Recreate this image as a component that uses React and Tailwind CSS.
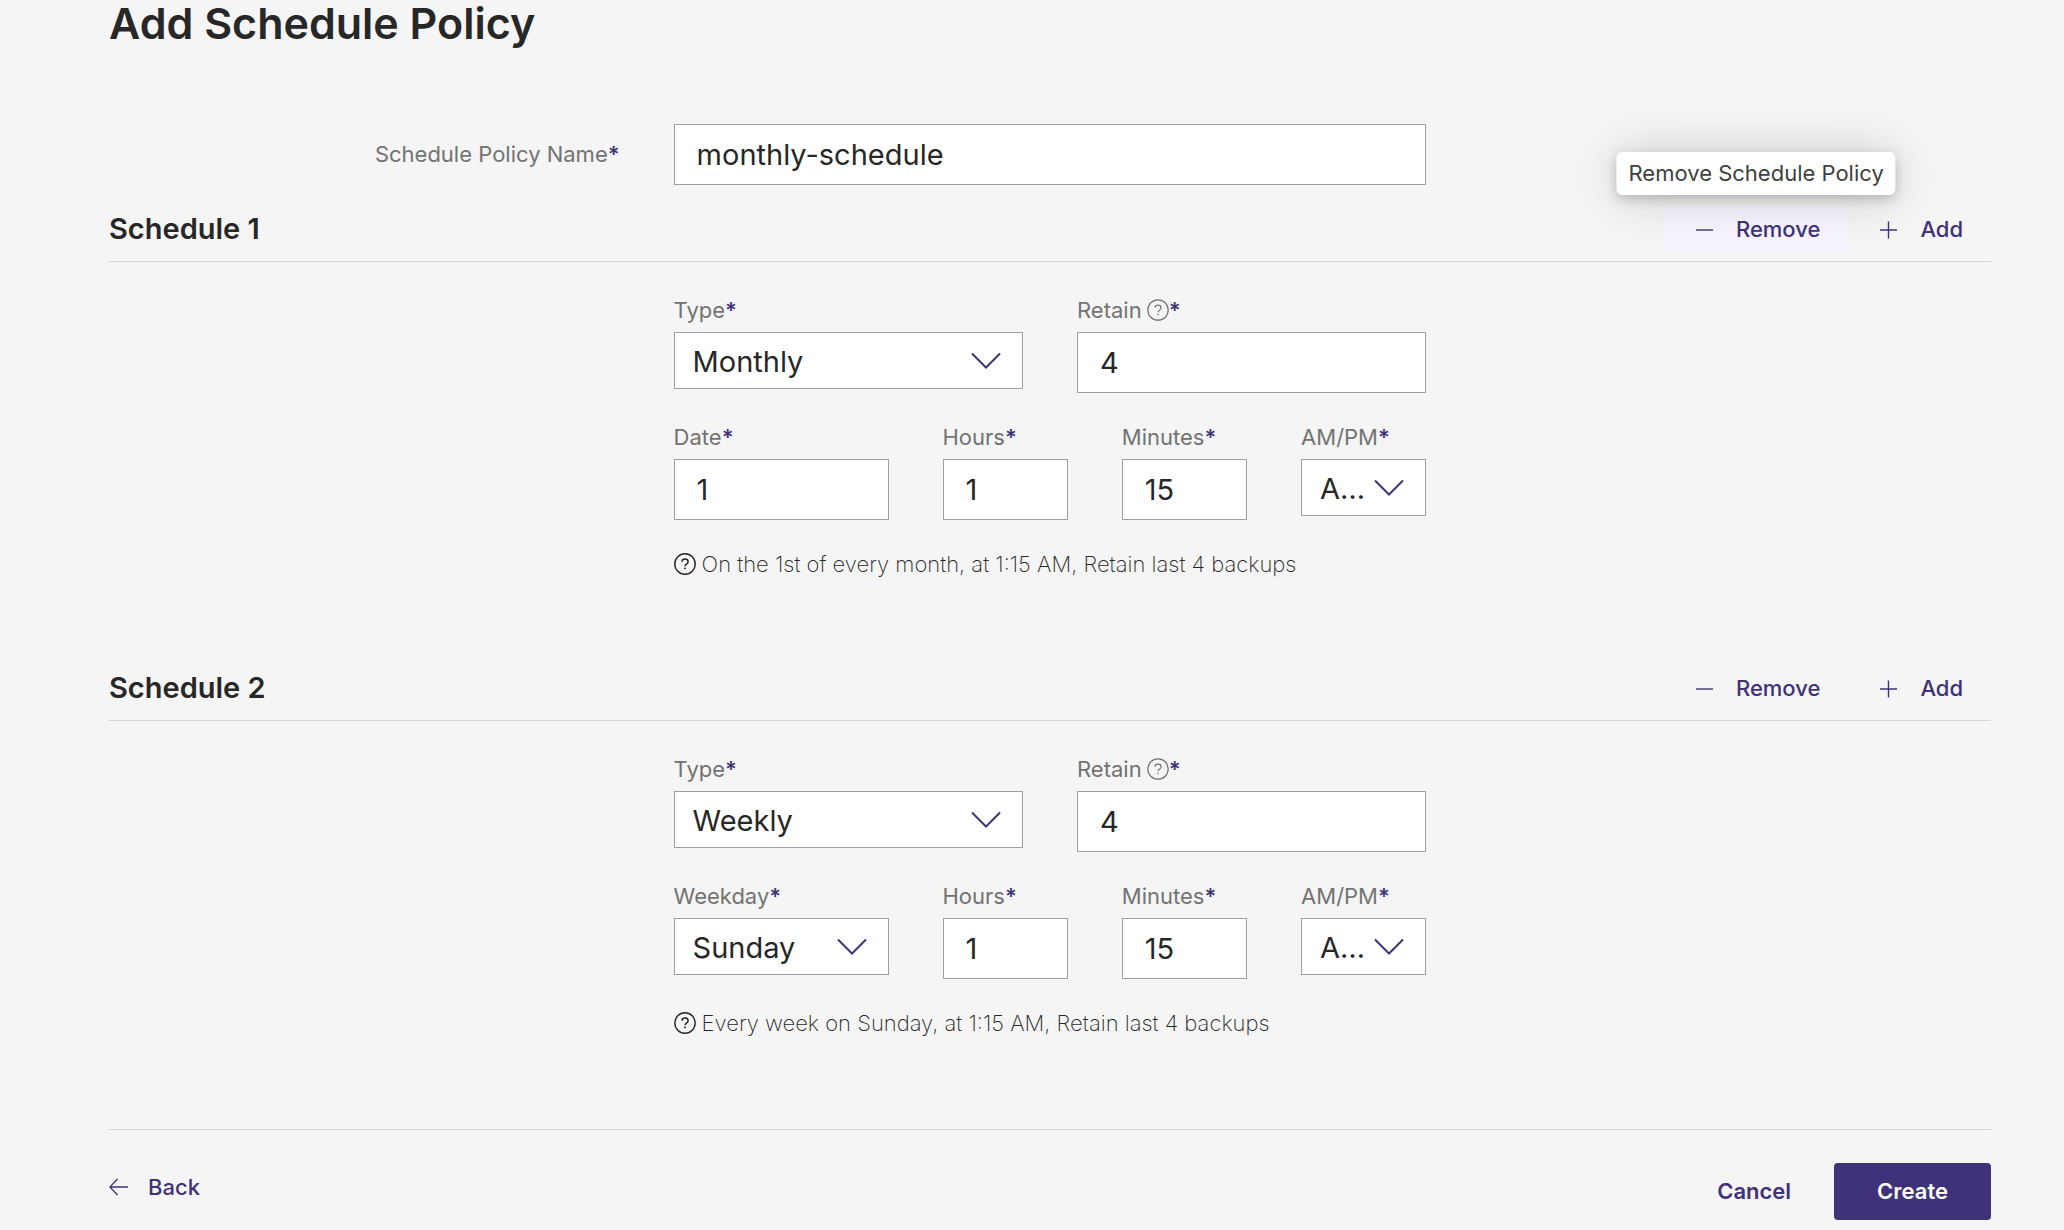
import React, { useState } from 'react';

const HelpIcon = ({ bold = false }) => (
  <svg className="w-[22px] h-[22px] flex-shrink-0" viewBox="0 0 22 22" fill="none" stroke="currentColor" strokeWidth={bold ? 1.4 : 1.2} aria-hidden="true">
    <circle cx="11" cy="11" r="10.2" />
    <path d="M8 8.8c.1-1.7 1.3-2.7 3-2.7s3.1 1 3.1 2.6c0 1.3-.8 1.9-1.7 2.5-.9.6-1.3 1-1.3 2" strokeWidth={bold ? 1.5 : 1.2} />
    <circle cx="11" cy="15.4" r={bold ? 0.7 : 0.5} fill="currentColor" strokeWidth="0.6" />
  </svg>
);

const MinusIcon = () => (
  <svg className="w-6 h-6" viewBox="0 0 24 24" fill="none" stroke="currentColor" strokeWidth="1.4" aria-hidden="true">
    <path d="M4 12h17" />
  </svg>
);

const PlusIcon = () => (
  <svg className="w-6 h-6" viewBox="0 0 24 24" fill="none" stroke="currentColor" strokeWidth="1.4" aria-hidden="true">
    <path d="M4 12h17M12.5 3.5v17" />
  </svg>
);

const BackIcon = () => (
  <svg className="w-[19px] h-[18px]" viewBox="0 0 19 18" fill="none" stroke="currentColor" strokeWidth="1.3" aria-hidden="true">
    <path d="M19 9H.8M8.6 1L.8 9l7.8 8" />
  </svg>
);

const Field = ({ id, label, help, className, children }) => (
  <div className={className}>
    <label htmlFor={id} className="flex items-center mb-2 text-[22px] leading-7 text-[#737373]">
      {label}
      {help && <span className="ml-[5px]"><HelpIcon /></span>}
      <span className="font-semibold text-[#3f3278]">*</span>
    </label>
    {children}
  </div>
);

const TextInput = (props) => (
  <input
    type="text"
    className="block w-full h-[61px] px-[22px] bg-white border border-[#a0a0a0] text-[29px] text-[#272727] outline-none"
    {...props}
  />
);

const Select = ({ id, options, defaultValue }) => (
  <div className="relative">
    <select
      id={id}
      defaultValue={defaultValue}
      className="block w-full h-[57px] pt-0.5 pl-[18px] pr-[60px] appearance-none bg-white border border-[#a0a0a0] text-[29px] text-[#272727] text-ellipsis outline-none"
    >
      {options.map((option) => (
        <option key={option}>{option}</option>
      ))}
    </select>
    <svg
      className="absolute right-[22px] top-5 w-[30px] h-[18px] text-[#3f3278] pointer-events-none"
      viewBox="0 0 30 18"
      fill="none"
      stroke="currentColor"
      strokeWidth="2"
      aria-hidden="true"
    >
      <path d="M1 1.5l14 14 14-14" />
    </svg>
  </div>
);

const ActionButton = ({ icon, tooltip, highlighted, children }) => (
  <div className="relative">
    <button
      type="button"
      className={`flex items-center gap-5 h-[47px] px-7 rounded-md text-[22px] font-medium text-[#3f3278] ${highlighted ? 'bg-[#f7f4fe]' : ''}`}
    >
      {icon}
      {children}
    </button>
    {tooltip && (
      <div
        role="tooltip"
        className="absolute bottom-full left-1/2 -translate-x-1/2 mb-[11px] px-3 py-2 rounded-md bg-white text-[22px] leading-[27px] text-[#404040] whitespace-nowrap shadow-[0_4px_12px_rgba(0,0,0,0.2),0_2px_50px_rgba(0,0,0,0.18)]"
      >
        {tooltip}
      </div>
    )}
  </div>
);

const TYPES = ['Daily', 'Weekly', 'Monthly'];
const WEEKDAYS = ['Sunday', 'Monday', 'Tuesday', 'Wednesday', 'Thursday', 'Friday', 'Saturday'];

const Schedule = ({ index, schedule, active }) => {
  const { type, retain, date, weekday, hours, minutes, summary } = schedule;
  const key = `schedule-${index}`;

  return (
    <section>
      <div className="flex items-center justify-between pb-2 border-b border-[#d4d4d4]">
        <h2 className="pb-0.5 text-[29px] leading-9 font-semibold text-[#272727]">Schedule {index}</h2>
        <div className="flex">
          <ActionButton icon={<MinusIcon />} highlighted={active} tooltip={active && 'Remove Schedule Policy'}>
            Remove
          </ActionButton>
          <ActionButton icon={<PlusIcon />}>Add</ActionButton>
        </div>
      </div>

      <div className="w-2/5 ml-[30%] pt-[34px]">
        <div className="grid grid-cols-2 gap-x-[54px]">
          <Field id={`${key}-type`} label="Type">
            <Select id={`${key}-type`} options={TYPES} defaultValue={type} />
          </Field>
          <Field id={`${key}-retain`} label="Retain" help>
            <TextInput id={`${key}-retain`} defaultValue={retain} />
          </Field>
        </div>

        <div className="grid grid-cols-9 gap-x-[54px] mt-[30px]">
          {weekday ? (
            <Field id={`${key}-weekday`} label="Weekday" className="col-span-3">
              <Select id={`${key}-weekday`} options={WEEKDAYS} defaultValue={weekday} />
            </Field>
          ) : (
            <Field id={`${key}-date`} label="Date" className="col-span-3">
              <TextInput id={`${key}-date`} defaultValue={date} />
            </Field>
          )}
          <Field id={`${key}-hours`} label="Hours" className="col-span-2">
            <TextInput id={`${key}-hours`} defaultValue={hours} />
          </Field>
          <Field id={`${key}-minutes`} label="Minutes" className="col-span-2">
            <TextInput id={`${key}-minutes`} defaultValue={minutes} />
          </Field>
          <Field id={`${key}-period`} label="AM/PM" className="col-span-2">
            <Select id={`${key}-period`} options={['AM', 'PM']} defaultValue="AM" />
          </Field>
        </div>

        <p className="flex items-center gap-[6px] mt-[30px] text-[22px] leading-7 font-extralight text-[#272727] whitespace-nowrap">
          <HelpIcon bold />
          {summary}
        </p>
      </div>
    </section>
  );
};

const SCHEDULES = [
  {
    type: 'Monthly',
    retain: '4',
    date: '1',
    hours: '1',
    minutes: '15',
    summary: 'On the 1st of every month, at 1:15 AM, Retain last 4 backups',
  },
  {
    type: 'Weekly',
    retain: '4',
    weekday: 'Sunday',
    hours: '1',
    minutes: '15',
    summary: 'Every week on Sunday, at 1:15 AM, Retain last 4 backups',
  },
];

const App = () => {
  const [name, setName] = useState('monthly-schedule');

  return (
    <main className="min-h-screen pl-[109px] pr-[73px] bg-[#f5f5f5] font-['Inter',sans-serif]">
      <h1 className="text-[43px] leading-[46px] font-semibold text-[#272727]">Add Schedule Policy</h1>

      <form onSubmit={(e) => e.preventDefault()}>
        <div className="flex items-center mt-[78px] mb-[21px]">
          <label htmlFor="policy-name" className="w-[30%] pr-[54px] pb-0.5 text-right text-[22px] leading-7 text-[#737373]">
            Schedule Policy Name<span className="font-semibold text-[#3f3278]">*</span>
          </label>
          <div className="w-2/5">
            <TextInput id="policy-name" value={name} onChange={(e) => setName(e.target.value)} />
          </div>
        </div>

        <div className="flex flex-col gap-[87px]">
          {SCHEDULES.map((schedule, i) => (
            <Schedule key={schedule.type} index={i + 1} schedule={schedule} active={i === 0} />
          ))}
        </div>

        {/* Footer */}
        <div className="flex items-start justify-between mt-[92px] pt-[33px] border-t border-[#d4d4d4]">
          <button type="button" className="flex items-center gap-5 h-12 text-[22px] font-medium text-[#3f3278]">
            <BackIcon />
            Back
          </button>
          <div className="flex items-center gap-[43px]">
            <button type="button" className="h-[57px] text-[22px] font-semibold text-[#3f3278]">Cancel</button>
            <button type="submit" className="h-[57px] px-[43px] rounded bg-[#3f3278] text-[22px] font-semibold text-white">
              Create
            </button>
          </div>
        </div>
      </form>
    </main>
  );
};

export default App;
